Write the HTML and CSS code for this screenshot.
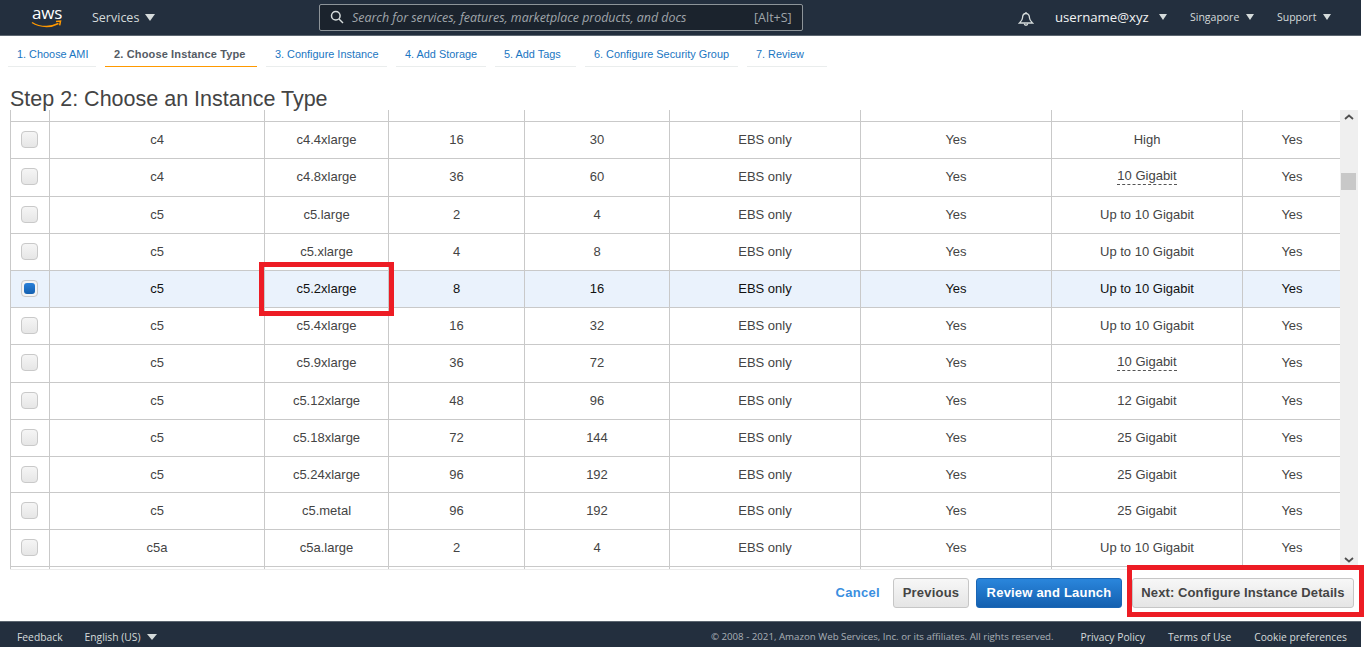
FILE: index.html
```html
<!DOCTYPE html>
<html lang="en">
<head>
<meta charset="utf-8">
<title>Step 2: Choose an Instance Type</title>
<link rel="stylesheet" href="styles.css">
</head>
<body>
<div class="page">
  <header class="topbar">
    <svg class="aws" viewBox="0 0 32 22" width="32" height="22"><path class="smile" d="M1 16.500c4.500 3 9.500 4 14.500 4 4 0 8-1 12-3"/><path class="arrow" d="M25 15.500l4.500-.5-.8 4.300"/><text x="1" y="13" class="awstext">aws</text></svg>
    <a class="nav services">Services<i class="caret"></i></a>
    <div class="search">
      <svg class="mag" viewBox="0 0 14 14" width="14" height="14"><circle cx="5.800" cy="5.800" r="4.300"/><path d="M9 9l4 4"/></svg>
      <span class="ph">Search for services, features, marketplace products, and docs</span>
      <span class="kbd">[Alt+S]</span>
    </div>
    <svg class="bell" viewBox="0 0 16 16" width="16" height="16"><path d="M8 2.500c-2.500 0-3.500 2-3.500 4.500 0 2-1.500 3.500-3 5h13c-1.500-1.500-3-3-3-5 0-2.500-1-4.500-3.500-4.500z"/><path d="M6.300 12.500c0 2.300 3.400 2.300 3.400 0M8 1v1.500"/></svg>
    <a class="nav user">username@xyz<i class="caret"></i></a>
    <a class="nav small region">Singapore<i class="caret"></i></a>
    <a class="nav small support">Support<i class="caret"></i></a>
  </header>

  <nav class="tabs">
    <a class="tab t1">1. Choose AMI</a>
    <a class="tab t2 active">2. Choose Instance Type</a>
    <a class="tab t3">3. Configure Instance</a>
    <a class="tab t4">4. Add Storage</a>
    <a class="tab t5">5. Add Tags</a>
    <a class="tab t6">6. Configure Security Group</a>
    <a class="tab t7">7. Review</a>
  </nav>

  <h1 class="title">Step 2: Choose an Instance Type</h1>

  <div class="tablewrap">
    <div class="tableclip">
      <table class="grid">
        <colgroup><col class="c0"><col class="c1"><col class="c2"><col class="c3"><col class="c4"><col class="c5"><col class="c6"><col class="c7"><col class="c8"></colgroup>
        <tbody>
          <tr class="stub"><td></td><td></td><td></td><td></td><td></td><td></td><td></td><td></td><td></td></tr>
          <tr class="h37"><td><i class="cb"></i></td><td>c4</td><td>c4.4xlarge</td><td>16</td><td>30</td><td>EBS only</td><td>Yes</td><td>High</td><td>Yes</td></tr>
          <tr class="h38"><td><i class="cb"></i></td><td>c4</td><td>c4.8xlarge</td><td>36</td><td>60</td><td>EBS only</td><td>Yes</td><td><span class="dash">10 Gigabit</span></td><td>Yes</td></tr>
          <tr class="h37"><td><i class="cb"></i></td><td>c5</td><td>c5.large</td><td>2</td><td>4</td><td>EBS only</td><td>Yes</td><td>Up to 10 Gigabit</td><td>Yes</td></tr>
          <tr class="h37"><td><i class="cb"></i></td><td>c5</td><td>c5.xlarge</td><td>4</td><td>8</td><td>EBS only</td><td>Yes</td><td>Up to 10 Gigabit</td><td>Yes</td></tr>
          <tr class="h37 selected"><td><i class="cb on"></i></td><td>c5</td><td>c5.2xlarge</td><td>8</td><td>16</td><td>EBS only</td><td>Yes</td><td>Up to 10 Gigabit</td><td>Yes</td></tr>
          <tr class="h37"><td><i class="cb"></i></td><td>c5</td><td>c5.4xlarge</td><td>16</td><td>32</td><td>EBS only</td><td>Yes</td><td>Up to 10 Gigabit</td><td>Yes</td></tr>
          <tr class="h38"><td><i class="cb"></i></td><td>c5</td><td>c5.9xlarge</td><td>36</td><td>72</td><td>EBS only</td><td>Yes</td><td><span class="dash">10 Gigabit</span></td><td>Yes</td></tr>
          <tr class="h37"><td><i class="cb"></i></td><td>c5</td><td>c5.12xlarge</td><td>48</td><td>96</td><td>EBS only</td><td>Yes</td><td>12 Gigabit</td><td>Yes</td></tr>
          <tr class="h37"><td><i class="cb"></i></td><td>c5</td><td>c5.18xlarge</td><td>72</td><td>144</td><td>EBS only</td><td>Yes</td><td>25 Gigabit</td><td>Yes</td></tr>
          <tr class="h36"><td><i class="cb"></i></td><td>c5</td><td>c5.24xlarge</td><td>96</td><td>192</td><td>EBS only</td><td>Yes</td><td>25 Gigabit</td><td>Yes</td></tr>
          <tr class="h37"><td><i class="cb"></i></td><td>c5</td><td>c5.metal</td><td>96</td><td>192</td><td>EBS only</td><td>Yes</td><td>25 Gigabit</td><td>Yes</td></tr>
          <tr class="h37"><td><i class="cb"></i></td><td>c5a</td><td>c5a.large</td><td>2</td><td>4</td><td>EBS only</td><td>Yes</td><td>Up to 10 Gigabit</td><td>Yes</td></tr>
          <tr class="stub"><td></td><td></td><td></td><td></td><td></td><td></td><td></td><td></td><td></td></tr>
        </tbody>
      </table>
    </div>
    <div class="scroll">
      <svg class="sarrow" viewBox="0 0 10 6" width="10" height="6"><path d="M1 5l4-3.500L9 5"/></svg>
      <div class="track"><div class="thumb"></div></div>
      <svg class="sarrow" viewBox="0 0 10 6" width="10" height="6"><path d="M1 1l4 3.500L9 1"/></svg>
    </div>
  </div>

  <div class="actions">
    <a class="cancel">Cancel</a>
    <button class="btn">Previous</button>
    <button class="btn primary">Review and Launch</button>
    <button class="btn next">Next: Configure Instance Details</button>
  </div>

  <footer class="foot">
    <a class="flink feedback">Feedback</a>
    <a class="flink lang">English (US)<i class="caret"></i></a>
    <span class="copy">© 2008 - 2021, Amazon Web Services, Inc. or its affiliates. All rights reserved.</span>
    <a class="flink">Privacy Policy</a>
    <a class="flink">Terms of Use</a>
    <a class="flink">Cookie preferences</a>
  </footer>
</div>
<div class="mark mark-cell"></div>
<div class="mark mark-next"></div>
</body>
</html>
```
FILE: styles.css
```css
* { box-sizing: border-box; }
html, body { margin: 0; height: 100%; background: #fff; overflow: hidden; }
body { font-family: "Liberation Sans", Arial, sans-serif; color: #444; position: relative; }
.page { width: 1361px; height: 647px; display: flex; flex-direction: column; }

.topbar { height: 36px; flex: none; background: #232f3e; border-bottom: 1px solid #5c6670; padding-bottom: 1px; display: flex; align-items: center; color: #d5dbdb; font-family: "Open Sans", sans-serif; }
.aws { margin-left: 31px; margin-top: -1px; overflow: visible; }
.awstext { font-family: "Open Sans", sans-serif; font-size: 17px; fill: #fff; letter-spacing: -0.2px; }
.smile { fill: none; stroke: #f90; stroke-width: 1.500; }
.arrow { fill: none; stroke: #f90; stroke-width: 1.500; }
.nav { display: flex; align-items: center; white-space: nowrap; }
.services { margin-left: 29px; font-size: 12.500px; width: 64px; }
.caret { display: inline-block; width: 0; height: 0; border-left: 5px solid transparent; border-right: 5px solid transparent; border-top: 7px solid #d5dbdb; margin-left: 6px; }
.search { margin-left: 163px; width: 484px; height: 27px; border: 1px solid #8d9499; border-radius: 2px; background: #1b232d; display: flex; align-items: center; padding-left: 10px; font-size: 12.400px; color: #a0a6ab; }
.mag { fill: none; stroke: #d5dbdb; stroke-width: 1.500; flex: none; }
.ph { margin-left: 8px; font-style: italic; width: 402px; white-space: nowrap; }
.kbd { font-size: 12.500px; }
.bell { margin-left: 215px; margin-top: 3px; fill: none; stroke: #d5dbdb; stroke-width: 1.300; flex: none; }
.user { margin-left: 21px; width: 113px; font-size: 13.200px; color: #f2f3f3; justify-content: space-between; padding-right: 1px; }
.user .caret { border-left-width: 4px; border-right-width: 4px; border-top-width: 6px; }
.small { font-size: 10.500px; }
.region { margin-left: 22px; width: 64px; justify-content: space-between; }
.support { margin-left: 23px; width: 54px; justify-content: space-between; }
.small .caret { margin-left: 4px; border-left-width: 4px; border-right-width: 4px; border-top-width: 6px; }

.tabs { flex: none; height: 31px; display: flex; padding-left: 8px; gap: 9px; }
.tab { height: 31px; padding: 12px 0 0 9px; text-align: left; font-size: 10.900px; line-height: 13px; color: #1a76c2; border-bottom: 1px solid #eaeded; white-space: nowrap; }
.t1 { width: 88px; }
.t2 { width: 152px; color: #545b64; font-weight: 700; font-size: 11px; letter-spacing: .15px; border-bottom: 1px solid #f90; }
.t3 { width: 121px; }
.t4 { width: 90px; }
.t5 { width: 81px; }
.t6 { width: 153px; }
.t7 { width: 80px; }

.title { flex: none; margin: 0; height: 43px; padding: 21px 0 0 10px; font-size: 21.500px; line-height: 23px; font-weight: 400; color: #444; white-space: nowrap; }

.tablewrap { flex: none; height: 459px; display: flex; padding-left: 10px; }
.tableclip { width: 1331px; height: 460px; overflow: hidden; border-bottom: 1px solid #ececec; }
.grid { width: 1331px; table-layout: fixed; border-collapse: collapse; font-size: 13px; color: #444; }
.grid td { padding: 0; border: 1px solid #c9c9c9; border-top: 0; text-align: center; vertical-align: middle; overflow: hidden; }
.grid tr { border-bottom: 1px solid #c9c9c9; }
.stub { height: 11px; }
.h36 { height: 36px; }
.h37 { height: 37px; }
.h38 { height: 38px; }
.h38 td { padding-bottom: 1px; }
.c0 { width: 39px; }
.c1 { width: 215px; }
.c2 { width: 124px; }
.c3 { width: 136px; }
.c4 { width: 145px; }
.c5 { width: 191px; }
.c6 { width: 191px; }
.c7 { width: 191px; }
.c8 { width: 99px; }
.selected td { background: #eaf2fc; color: #111; }
.cb { display: block; width: 17px; height: 17px; margin: 0 auto; position: relative; left: -1px; border: 1px solid #c9c9c9; border-radius: 4px; background: linear-gradient(#f5f5f5, #e6e6e6); }
.cb.on { padding: 2px; background: #f4f4f4; }
.cb.on::before { content: ""; display: block; width: 100%; height: 100%; border-radius: 3px; background: linear-gradient(#2a80d8, #1460b0); }
.dash { border-bottom: 1px dashed #555; padding-bottom: 1px; position: relative; top: -1px; }

.scroll { width: 18px; height: 459px; margin-left: -1px; background: #efefef; display: flex; flex-direction: column; align-items: center; padding-top: 4px; }
.sarrow { fill: none; stroke: #505050; stroke-width: 1.800; flex: none; }
.track { flex: 1; width: 100%; padding-top: 53px; padding-left: 1px; }
.thumb { width: 15px; height: 17px; background: #c8c8c8; }
.scroll .sarrow:last-child { margin-bottom: 6px; }

.actions { flex: none; height: 52px; display: flex; align-items: center; justify-content: flex-end; padding: 0 7px 5px 0; font-size: 13px; font-weight: 700; }
.cancel { color: #3a8ee0; margin-right: 13px; letter-spacing: .3px; }
.btn { height: 30px; font: 700 13px "Liberation Sans", Arial, sans-serif; letter-spacing: .2px; border: 1px solid #c6c6c6; border-radius: 3px; background: linear-gradient(#f7f7f7, #e5e5e5); color: #444; padding: 0; margin: 0; white-space: nowrap; }
.btn { width: 76px; margin-right: 7px; }
.btn.primary { width: 146px; margin-right: 10px; background: linear-gradient(#2a86dc, #1460b0); border-color: #1a66b5; color: #fff; }
.btn.next { width: 222px; margin-right: 0; letter-spacing: .1px; }

.foot { flex: none; height: 26px; background: #232f3e; border-top: 1px solid #5c6670; display: flex; align-items: center; padding: 4px 0 0 17px; font-family: "Open Sans", sans-serif; font-size: 10.300px; color: #d5dbdb; }
.flink { display: flex; align-items: center; white-space: nowrap; margin-left: 23px; }
.feedback { margin-left: 0; }
.lang { margin-left: 22px; }
.lang .caret { border-top-width: 6px; margin-left: 6px; border-left-width: 5px; border-right-width: 5px; }
.copy { margin-left: auto; font-size: 9.700px; color: #aab0b6; margin-right: 4px; white-space: nowrap; }
.foot .flink:last-child { margin-right: 14px; }

.mark { position: absolute; border: 5px solid #ed1c24; pointer-events: none; }
.mark-cell { left: 259px; top: 262px; width: 135px; height: 54px; }
.mark-next { left: 1127px; top: 565px; width: 237px; height: 52px; }
```
